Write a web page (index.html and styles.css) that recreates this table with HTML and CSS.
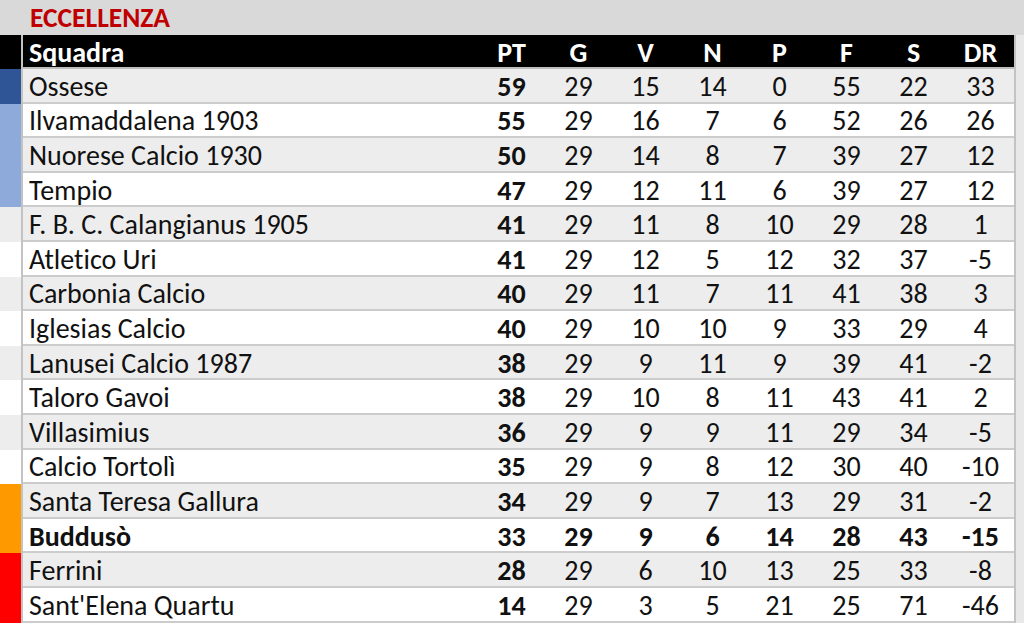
FILE: index.html
```html
<!DOCTYPE html>
<html lang="it">
<head>
<meta charset="utf-8">
<title>Eccellenza</title>
<link rel="stylesheet" href="styles.css">
</head>
<body>
<div class="page">
  <div class="band"><span class="title">ECCELLENZA</span></div>
  <div class="table">
    <div class="row head">
      <div class="strip s-black"></div>
      <div class="team">Squadra</div><div class="c">PT</div><div class="c">G</div><div class="c">V</div><div class="c">N</div><div class="c">P</div><div class="c">F</div><div class="c">S</div><div class="c">DR</div>
    </div>
    <div class="row odd"><div class="strip s-blue"></div><div class="team">Ossese</div><div class="c b">59</div><div class="c">29</div><div class="c">15</div><div class="c">14</div><div class="c">0</div><div class="c">55</div><div class="c">22</div><div class="c">33</div></div>
    <div class="row even"><div class="strip s-lblue"></div><div class="team">Ilvamaddalena 1903</div><div class="c b">55</div><div class="c">29</div><div class="c">16</div><div class="c">7</div><div class="c">6</div><div class="c">52</div><div class="c">26</div><div class="c">26</div></div>
    <div class="row odd"><div class="strip s-lblue"></div><div class="team">Nuorese Calcio 1930</div><div class="c b">50</div><div class="c">29</div><div class="c">14</div><div class="c">8</div><div class="c">7</div><div class="c">39</div><div class="c">27</div><div class="c">12</div></div>
    <div class="row even"><div class="strip s-lblue"></div><div class="team">Tempio</div><div class="c b">47</div><div class="c">29</div><div class="c">12</div><div class="c">11</div><div class="c">6</div><div class="c">39</div><div class="c">27</div><div class="c">12</div></div>
    <div class="row odd"><div class="strip"></div><div class="team">F. B. C. Calangianus 1905</div><div class="c b">41</div><div class="c">29</div><div class="c">11</div><div class="c">8</div><div class="c">10</div><div class="c">29</div><div class="c">28</div><div class="c">1</div></div>
    <div class="row even"><div class="strip"></div><div class="team">Atletico Uri</div><div class="c b">41</div><div class="c">29</div><div class="c">12</div><div class="c">5</div><div class="c">12</div><div class="c">32</div><div class="c">37</div><div class="c">-5</div></div>
    <div class="row odd"><div class="strip"></div><div class="team">Carbonia Calcio</div><div class="c b">40</div><div class="c">29</div><div class="c">11</div><div class="c">7</div><div class="c">11</div><div class="c">41</div><div class="c">38</div><div class="c">3</div></div>
    <div class="row even"><div class="strip"></div><div class="team">Iglesias Calcio</div><div class="c b">40</div><div class="c">29</div><div class="c">10</div><div class="c">10</div><div class="c">9</div><div class="c">33</div><div class="c">29</div><div class="c">4</div></div>
    <div class="row odd"><div class="strip"></div><div class="team">Lanusei Calcio 1987</div><div class="c b">38</div><div class="c">29</div><div class="c">9</div><div class="c">11</div><div class="c">9</div><div class="c">39</div><div class="c">41</div><div class="c">-2</div></div>
    <div class="row even"><div class="strip"></div><div class="team">Taloro Gavoi</div><div class="c b">38</div><div class="c">29</div><div class="c">10</div><div class="c">8</div><div class="c">11</div><div class="c">43</div><div class="c">41</div><div class="c">2</div></div>
    <div class="row odd"><div class="strip"></div><div class="team">Villasimius</div><div class="c b">36</div><div class="c">29</div><div class="c">9</div><div class="c">9</div><div class="c">11</div><div class="c">29</div><div class="c">34</div><div class="c">-5</div></div>
    <div class="row even"><div class="strip"></div><div class="team">Calcio Tortolì</div><div class="c b">35</div><div class="c">29</div><div class="c">9</div><div class="c">8</div><div class="c">12</div><div class="c">30</div><div class="c">40</div><div class="c">-10</div></div>
    <div class="row odd"><div class="strip s-orange"></div><div class="team">Santa Teresa Gallura</div><div class="c b">34</div><div class="c">29</div><div class="c">9</div><div class="c">7</div><div class="c">13</div><div class="c">29</div><div class="c">31</div><div class="c">-2</div></div>
    <div class="row even bold"><div class="strip s-orange"></div><div class="team">Buddusò</div><div class="c">33</div><div class="c">29</div><div class="c">9</div><div class="c">6</div><div class="c">14</div><div class="c">28</div><div class="c">43</div><div class="c">-15</div></div>
    <div class="row odd"><div class="strip s-red"></div><div class="team">Ferrini</div><div class="c b">28</div><div class="c">29</div><div class="c">6</div><div class="c">10</div><div class="c">13</div><div class="c">25</div><div class="c">33</div><div class="c">-8</div></div>
    <div class="row even"><div class="strip s-red"></div><div class="team">Sant'Elena Quartu</div><div class="c b">14</div><div class="c">29</div><div class="c">3</div><div class="c">5</div><div class="c">21</div><div class="c">25</div><div class="c">71</div><div class="c">-46</div></div>
  </div>
</div>
</body>
</html>
```
FILE: styles.css
```css
* { box-sizing: border-box; }
html, body { margin: 0; padding: 0; }
body {
  background: #ffffff;
  font-family: Carlito, Lato, "Open Sans", sans-serif;
  font-variant-ligatures: none;
  color: #111;
  width: 1024px;
  height: 629px;
  overflow: hidden;
}
.page { width: 1024px; }
.band {
  height: 35px;
  background: #d9d9d9;
  padding-left: 30px;
  display: flex;
  align-items: center;
}
.title {
  color: #c00000;
  font-weight: 700;
  font-size: 27.5px;
  line-height: 1;
}
.table {
  background: #e8e8e8;
}
.row {
  display: grid;
  grid-template-columns: 21px 2px 455px repeat(8, 67px) 2px 1fr;
  height: 34.6px;
  font-size: 28px;
  line-height: 1;
  align-items: stretch;
}
.row > * { display: flex; align-items: center; }
.strip { grid-column: 1; }
.row::before {
  content: "";
  grid-column: 2;
  grid-row: 1;
  background: #c3c3c3;
}
.row::after {
  content: "";
  grid-column: 12;
  grid-row: 1;
  background: #c3c3c3;
}
.team { grid-column: 3; padding-left: 6px; border-bottom: 2px solid #cccccc; padding-top: 3px; }
.c { justify-content: center; border-bottom: 2px solid #cccccc; padding-top: 3px; }
.head { height: 34px; }
.head .team, .head .c { background: #000; color: #fff; font-weight: 700; border-bottom-color: #bdbdbd; }
.odd .team, .odd .c { background: #ededed; }
.even .team, .even .c { background: #ffffff; }
.odd .strip { background: #ededed; }
.even .strip { background: #ffffff; }
.strip.s-black { background: #000; }
.strip.s-blue { background: #2f5597; }
.strip.s-lblue { background: #8eaadb; }
.strip.s-orange { background: #ff9900; }
.strip.s-red { background: #ff0000; }
.b { font-weight: 700; }
.bold .team, .bold .c { font-weight: 700; }
```
